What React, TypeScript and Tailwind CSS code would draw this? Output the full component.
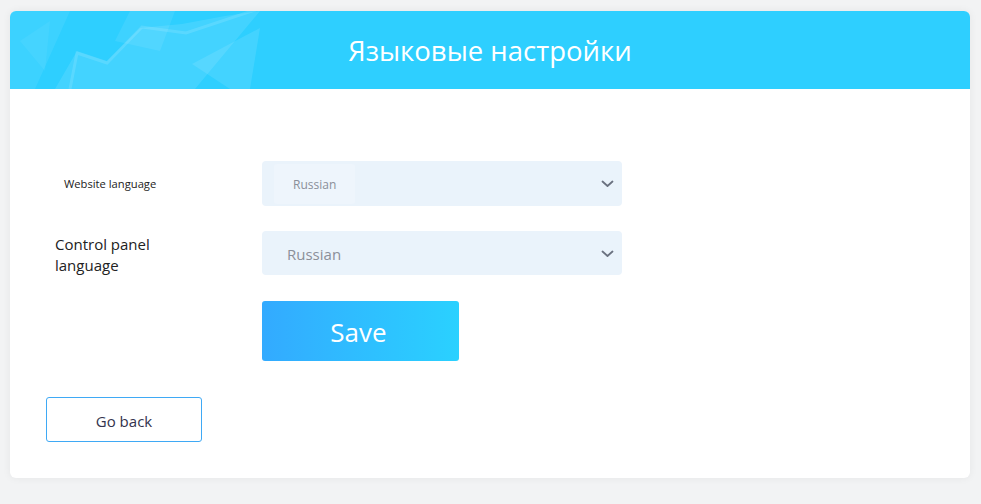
import React from "react";

function Chevron() {
  return (
    <svg width="13" height="8" viewBox="0 0 13 8" fill="none">
      <path d="M1.5 1.5 L6.5 6 L11.5 1.5" stroke="#6b7280" strokeWidth="1.8" strokeLinecap="round" strokeLinejoin="round" />
    </svg>
  );
}

export default function App() {
  return (
    <div className="min-h-[504px] w-full bg-[#f2f3f4] pt-[11px] px-[10px] pb-[27px]" style={{ fontFamily: '"Open Sans", "Noto Sans", sans-serif' }}>
      <div className="w-[960px] rounded-[6px] bg-white shadow-[0_0_8px_rgba(0,0,0,0.06)] overflow-hidden">
        <div className="relative h-[78px] bg-[#2ecfff] flex items-center justify-center">
          <svg className="absolute left-0 top-0" width="260" height="78" viewBox="0 0 260 78">
            <polygon points="0,0 60,0 25,78 0,78" fill="#ffffff" opacity="0.07" />
            <polygon points="45,78 67,40 97,50 130,17 172,13 215,5 250,0 185,78" fill="#ffffff" opacity="0.1" />
            <polygon points="120,0 165,0 150,40 105,30" fill="#ffffff" opacity="0.08" />
            <polygon points="182,53 250,17 240,78 220,78" fill="#ffffff" opacity="0.1" />
            <polygon points="10,30 40,10 35,60" fill="#ffffff" opacity="0.05" />
            <polyline points="60,78 67,42 97,52 132,16 176,22 248,-2" stroke="#ffffff" strokeOpacity="0.12" strokeWidth="3" fill="none" />
          </svg>
          <h1 className="relative text-white text-[27.5px] leading-none mt-[1px]">Языковые настройки</h1>
        </div>
        <div className="pt-[72px] pb-[36px]">
          <div className="flex items-center h-[45px]">
            <div className="w-[252px] pl-[54px] text-[11.2px] pt-[1px] text-[#222]">Website language</div>
            <div className="relative w-[360px] h-[45px] rounded-[4px] bg-[#eaf3fb] flex items-center">
              <div className="ml-[12px] h-[40px] px-[19px] pt-[2px] rounded-[3px] bg-[#eef5fc] flex items-center text-[12px] text-[#8a8f99]">Russian</div>
              <div className="absolute right-[8px] top-[19px]"><Chevron /></div>
            </div>
          </div>
          <div className="flex items-center h-[44px] mt-[25px]">
            <div className="w-[252px] pl-[45px] pt-[3px] text-[15px] leading-[21px] text-[#222]">Control panel<br />language</div>
            <div className="relative w-[360px] h-[44px] rounded-[4px] bg-[#eaf3fb] flex items-center">
              <div className="ml-[25px] pt-[3px] text-[15px] text-[#8a8f99]">Russian</div>
              <div className="absolute right-[8px] top-[19px]"><Chevron /></div>
            </div>
          </div>
          <div className="flex mt-[26px]">
            <div className="w-[252px]" />
            <button className="w-[197px] h-[60px] rounded-[3px] bg-gradient-to-r from-[#33aaff] to-[#2ad1ff] text-white text-[26px] flex items-center justify-center pt-[3px] pr-[4px]">Save</button>
          </div>
          <div className="mt-[36px] pl-[36px]">
            <button className="w-[156px] h-[45px] rounded-[3px] border border-[#3fa9f5] bg-white text-[15px] text-[#33334d] pt-[3px]">Go back</button>
          </div>
        </div>
      </div>
    </div>
  );
}
